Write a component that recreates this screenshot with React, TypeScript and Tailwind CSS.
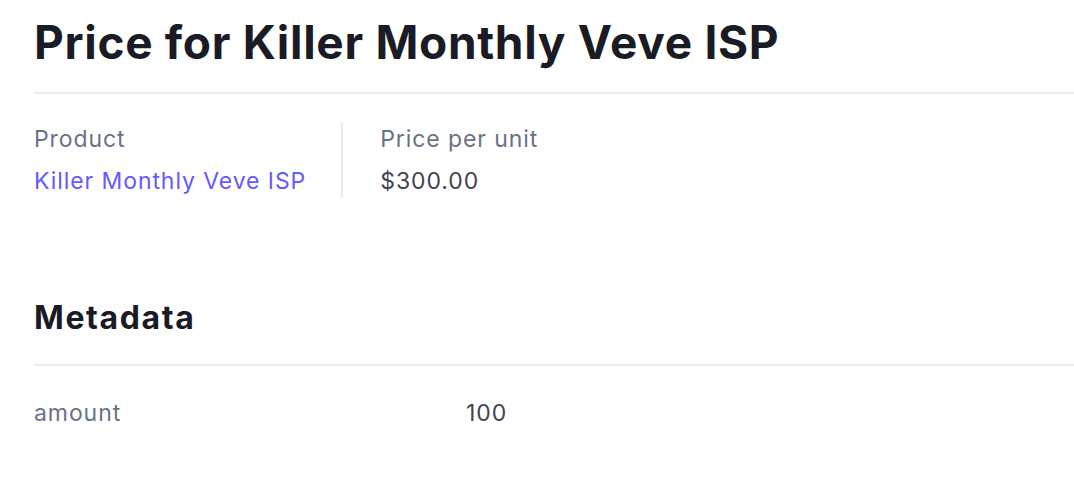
import React from 'react';

const metadata = [{ key: 'amount', value: '100' }];

export default function App() {
  return (
    <div className="min-h-screen bg-white pl-[34px] pt-[15px] font-['Inter',sans-serif] antialiased">
      <h1 className="border-b-2 border-[#ebebf0] pb-[22px] text-[46px] font-bold leading-[55px] tracking-[0.015em] text-[#1a1b25]">
        Price for Killer Monthly Veve ISP
      </h1>

      <div className="mt-7 flex text-[23px] leading-[34px] tracking-[0.04em]">
        <div className="border-r-2 border-[#ebebf0] pr-[35px]">
          <p className="text-[#687385]">Product</p>
          <p className="mt-2 text-[#635bff]">Killer Monthly Veve ISP</p>
        </div>
        <div className="pl-[37px]">
          <p className="text-[#687385]">Price per unit</p>
          <p className="mt-2 text-[#414552]">$300.00</p>
        </div>
      </div>

      <h2 className="mt-[101px] border-b-2 border-[#ebebf0] pb-[27px] text-[32px] font-bold leading-[38px] tracking-[0.05em] text-[#1a1b25]">
        Metadata
      </h2>

      <div className="mt-[30px]">
        {metadata.map((row) => (
          <div
            key={row.key}
            className="grid grid-cols-[432px_1fr] text-[23px] leading-[34px] tracking-[0.04em]"
          >
            <span className="text-[#687385]">{row.key}</span>
            <span className="text-[#414552]">{row.value}</span>
          </div>
        ))}
      </div>
    </div>
  );
}
